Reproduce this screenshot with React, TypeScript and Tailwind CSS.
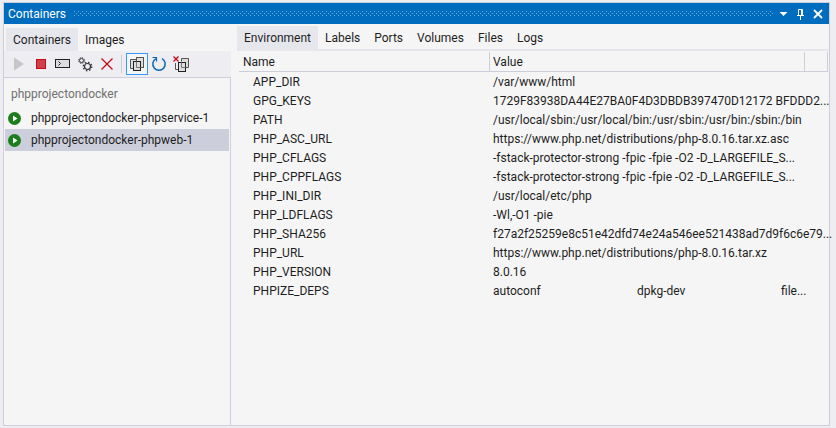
import React, { useState } from 'react';
import clsx from 'clsx';

const CONTAINERS = ['phpprojectondocker-phpservice-1', 'phpprojectondocker-phpweb-1'];

const DETAIL_TABS = ['Environment', 'Labels', 'Ports', 'Volumes', 'Files', 'Logs'];

const ENVIRONMENT: { name: string; value: string[] }[] = [
  { name: 'APP_DIR', value: ['/var/www/html'] },
  { name: 'GPG_KEYS', value: ['1729F83938DA44E27BA0F4D3DBDB397470D12172 BFDDD2...'] },
  { name: 'PATH', value: ['/usr/local/sbin:/usr/local/bin:/usr/sbin:/usr/bin:/sbin:/bin'] },
  { name: 'PHP_ASC_URL', value: ['https://www.php.net/distributions/php-8.0.16.tar.xz.asc'] },
  { name: 'PHP_CFLAGS', value: ['-fstack-protector-strong -fpic -fpie -O2 -D_LARGEFILE_S...'] },
  { name: 'PHP_CPPFLAGS', value: ['-fstack-protector-strong -fpic -fpie -O2 -D_LARGEFILE_S...'] },
  { name: 'PHP_INI_DIR', value: ['/usr/local/etc/php'] },
  { name: 'PHP_LDFLAGS', value: ['-Wl,-O1 -pie'] },
  { name: 'PHP_SHA256', value: ['f27a2f25259e8c51e42dfd74e24a546ee521438ad7d9f6c6e79...'] },
  { name: 'PHP_URL', value: ['https://www.php.net/distributions/php-8.0.16.tar.xz'] },
  { name: 'PHP_VERSION', value: ['8.0.16'] },
  { name: 'PHPIZE_DEPS', value: ['autoconf', 'dpkg-dev', 'file...'] },
];

const Icon: React.FC<{ children: React.ReactNode }> = ({ children }) => (
  <svg width="16" height="16" viewBox="0 0 16 16" fill="none" className="shrink-0" aria-hidden="true">
    {children}
  </svg>
);

const PlayIcon = () => (
  <Icon>
    <path d="M3 1.5v13L13 8z" fill="#c6c6c9" />
  </Icon>
);

const StopIcon = () => (
  <Icon>
    <rect x="3.5" y="3.5" width="9" height="9" fill="#cf3f4a" stroke="#c50b17" />
  </Icon>
);

const TerminalIcon = () => (
  <Icon>
    <rect x="0.5" y="3.5" width="14" height="8" fill="#dddde0" stroke="#212121" />
    <path d="M3.5 5.5l2 2-2 2" stroke="#212121" />
  </Icon>
);

const GearsIcon = () => (
  <Icon>
    <circle cx="4.5" cy="4.5" r="2" stroke="#333" />
    <circle cx="4.5" cy="4.5" r="3" stroke="#333" strokeDasharray="1.1 1.26" />
    <circle cx="10.5" cy="10.5" r="3" stroke="#333" strokeWidth="1.2" />
    <circle cx="10.5" cy="10.5" r="4.2" stroke="#333" strokeWidth="1.4" strokeDasharray="1.5 1.8" />
  </Icon>
);

const DeleteIcon = () => (
  <Icon>
    <path d="M2.5 2.5l11 11M13.5 2.5l-11 11" stroke="#c50b17" strokeWidth="1.3" />
  </Icon>
);

const ShowAllIcon = () => (
  <Icon>
    <path d="M4.5 12.5h-3v-9h6v2" fill="#dddde0" stroke="#555" />
    <rect x="7.5" y="1.5" width="7" height="10" fill="#dddde0" stroke="#555" />
    <rect x="4.5" y="5.5" width="7" height="9" fill="#dddde0" stroke="#212121" />
    <path d="M7.5 5.5v6h4" stroke="#777" />
  </Icon>
);

const RefreshIcon = () => (
  <Icon>
    <path d="M5 2.7a6.2 6.2 0 1 0 6 0" stroke="#0f68b4" strokeWidth="1.5" />
    <path d="M1.5 1.5h4v4" stroke="#0f68b4" strokeWidth="1.2" />
  </Icon>
);

const PruneIcon = () => (
  <Icon>
    <path d="M8.5 5.5v-3h7v9h-3" fill="#dddde0" stroke="#555" />
    <path d="M2.5 7v6.5h3" stroke="#555" />
    <rect x="5.5" y="6.5" width="7" height="9" fill="#dddde0" stroke="#212121" />
    <path d="M8.5 6.5v5h4" stroke="#777" />
    <path d="M0.5 0.5l5 5M5.5 0.5l-5 5" stroke="#c50b17" strokeWidth="1.3" />
  </Icon>
);

const RunningIcon = () => (
  <svg width="13" height="13" viewBox="0 0 13 13" className="shrink-0" aria-hidden="true">
    <circle cx="6.5" cy="6.5" r="6.5" fill="#1d7d1d" />
    <path d="M5 3.5v6l4.5-3z" fill="#fff" />
  </svg>
);

const ToolButton: React.FC<{ label: string; pressed?: boolean; disabled?: boolean; children: React.ReactNode }> = ({
  label,
  pressed,
  disabled,
  children,
}) => (
  <button
    type="button"
    aria-label={label}
    aria-pressed={pressed}
    disabled={disabled}
    className={clsx(
      'flex size-[22px] items-center justify-center border',
      pressed ? 'border-[#3399ff] bg-[#f4f4f4]' : 'border-transparent',
    )}
  >
    {children}
  </button>
);

const TitleBar = () => (
  <header className="flex h-[21px] items-center bg-[#006cbe] pr-1.5 pl-1 text-white">
    <h1>Containers</h1>
    <svg className="mr-1.5 ml-2 h-[5px] min-w-0 flex-1" aria-hidden="true">
      <pattern id="grip" width="4" height="4" patternUnits="userSpaceOnUse">
        <rect width="1" height="1" fill="#66aee3" />
        <rect x="2" y="2" width="1" height="1" fill="#66aee3" />
      </pattern>
      <rect width="100%" height="5" fill="url(#grip)" />
    </svg>
    <button type="button" aria-label="Window position">
      <svg width="9" height="12" viewBox="0 0 9 12">
        <path d="M0.5 4h8L4.5 8z" fill="#fff" />
      </svg>
    </button>
    <button type="button" aria-label="Auto hide" className="ml-2">
      <svg width="9" height="12" viewBox="0 0 9 12" fill="none" stroke="#fff">
        <path d="M2.5 7V1.5h4V7M5.5 1v6M1 7.5h7M4.5 8v4" />
      </svg>
    </button>
    <button type="button" aria-label="Close" className="ml-2">
      <svg width="10" height="12" viewBox="0 0 10 12" fill="none" stroke="#fff" strokeWidth="1.8">
        <path d="M1 2l8 8M9 2l-8 8" />
      </svg>
    </button>
  </header>
);

const ContainerList = () => {
  const [selected, setSelected] = useState(CONTAINERS[1]);

  return (
    <section className="flex w-[227px] shrink-0 flex-col">
      <div role="tablist" className="flex px-0.5 pt-1">
        <button type="button" role="tab" aria-selected="true" className="h-[23px] bg-[#e6e7ed] px-[7px]">
          Containers
        </button>
        <button type="button" role="tab" aria-selected="false" className="h-[23px] px-[7px]">
          Images
        </button>
      </div>
      <div role="toolbar" className="flex h-[26px] items-center bg-[#eeeef2] pl-1">
        <ToolButton label="Start" disabled><PlayIcon /></ToolButton>
        <ToolButton label="Stop"><StopIcon /></ToolButton>
        <ToolButton label="Open terminal"><TerminalIcon /></ToolButton>
        <ToolButton label="Settings"><GearsIcon /></ToolButton>
        <ToolButton label="Remove"><DeleteIcon /></ToolButton>
        <div className="mr-1 ml-[3px] h-[18px] w-px bg-[#cccedb]" />
        <ToolButton label="Show all containers" pressed><ShowAllIcon /></ToolButton>
        <ToolButton label="Refresh"><RefreshIcon /></ToolButton>
        <ToolButton label="Prune containers"><PruneIcon /></ToolButton>
      </div>
      <div className="flex-1 border-t border-r border-[#cccedb] px-px pt-1">
        <h2 className="mb-0.5 flex h-[23px] items-center pl-1.5 text-[#717171]">phpprojectondocker</h2>
        <ul>
          {CONTAINERS.map(name => (
            <li key={name}>
              <button
                type="button"
                onClick={() => setSelected(name)}
                className={clsx(
                  'flex h-[22px] w-full items-center gap-2.5 pl-[3px]',
                  name === selected && 'bg-[#cccedb]',
                )}
              >
                <RunningIcon />
                {name}
              </button>
            </li>
          ))}
        </ul>
      </div>
    </section>
  );
};

const Details = () => {
  const [tab, setTab] = useState('Environment');

  return (
    <section className="flex min-w-0 flex-1 flex-col pt-0.5 pl-1.5">
      <div role="tablist" className="flex border-b-2 border-[#e6e7ed]">
        {DETAIL_TABS.map(name => (
          <button
            key={name}
            type="button"
            role="tab"
            aria-selected={name === tab}
            onClick={() => setTab(name)}
            className={clsx('h-[23px] px-[7px]', name === tab && 'bg-[#e6e7ed]')}
          >
            {name}
          </button>
        ))}
      </div>
      <div className="mt-px mr-px ml-0.5">
        <table className="w-full table-fixed border-separate border-spacing-0 text-left">
          <thead>
            <tr className="h-5">
              <th className="w-[251px] border-r border-b border-[#cccedb] p-0 pl-1 font-normal">Name</th>
              <th className="border-r border-b border-[#cccedb] p-0 pl-[3px] font-normal">Value</th>
              <th className="w-[23px] border-r border-b border-[#cccedb] p-0" />
            </tr>
          </thead>
          <tbody>
            {ENVIRONMENT.map(({ name, value }) => (
              <tr key={name} className="h-[19px]">
                <td className="p-0 pl-3.5">{name}</td>
                <td colSpan={2} className="p-0 pl-[3px] whitespace-nowrap">
                  {value.map((part, i) => (
                    <span key={part} className={clsx(i < value.length - 1 && 'inline-block w-36')}>
                      {part}
                    </span>
                  ))}
                </td>
              </tr>
            ))}
          </tbody>
        </table>
      </div>
    </section>
  );
};

export default function App() {
  return (
    <div className="flex h-screen flex-col bg-[#eeeef2] pt-0.5 pr-1.5 pb-0.5 pl-[3px] font-[Roboto,sans-serif] text-[12px] leading-4 text-[#1e1e1e]">
      <main className="flex min-h-0 flex-1 flex-col border border-[#cccedb] bg-[#f5f5f5]">
        <TitleBar />
        <div className="flex min-h-0 flex-1">
          <ContainerList />
          <Details />
        </div>
      </main>
    </div>
  );
}
